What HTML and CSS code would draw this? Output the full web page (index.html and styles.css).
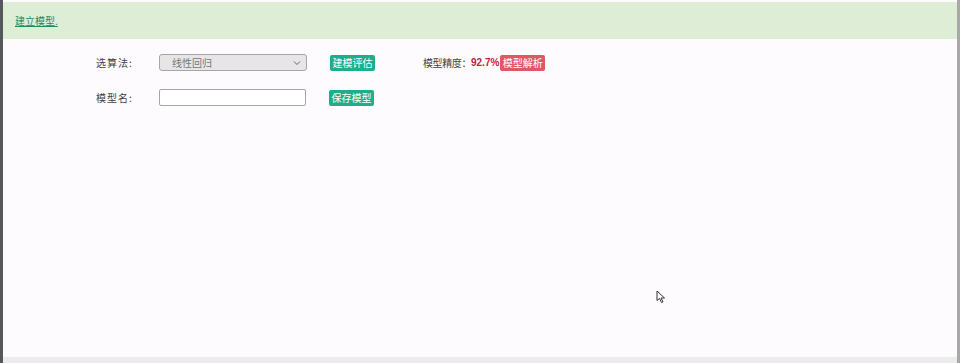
FILE: index.html
```html
<!DOCTYPE html>
<html lang="zh">
<head>
    <meta charset="UTF-8">
    <meta name="viewport" content="width=device-width, initial-scale=1.0">
    <title>建立模型</title>
    <link rel="stylesheet" href="styles.css">
</head>
<body>
    <div class="frame">
        <!-- Header -->
        <div class="panel-head">
            <a href="#">建立模型.</a>
        </div>

        <!-- Form -->
        <div class="panel-body">
            <div class="row">
                <label class="lbl">选算法:</label>
                <div class="select">
                    <span>线性回归</span>
                    <svg width="8" height="6" viewBox="0 0 8 6"><path d="M1 1.5 L4 4.5 L7 1.5" fill="none" stroke="#666" stroke-width="1"/></svg>
                </div>
                <button class="btn btn-green">建模评估</button>
                <span class="acc-label">模型精度：</span>
                <span class="acc-value">92.7%</span>
                <button class="btn btn-red">模型解析</button>
            </div>
            <div class="row">
                <label class="lbl">模型名:</label>
                <input type="text" class="text-input">
                <button class="btn btn-green">保存模型</button>
            </div>
        </div>

        <div class="bottom-bar"></div>
    </div>

    <!-- mouse pointer -->
    <svg class="cursor" width="12" height="14" viewBox="0 0 12 14">
        <path d="M1 1 L1 10.5 L3.5 8.5 L5.5 12.5 L7 11.8 L5 8 L8.5 8 Z" fill="#fff" stroke="#333" stroke-width="1"/>
    </svg>
</body>
</html>
```

FILE: styles.css
```css
html, body {
    margin: 0;
    padding: 0;
    height: 100%;
}
body {
    font-family: "Noto Sans CJK SC", "Liberation Sans", sans-serif;
    font-size: 10px;
    background-color: #fdfbfd;
    color: #444;
    overflow: hidden;
}
.frame {
    height: 363px;
    box-sizing: border-box;
    border-left: 3px solid #55585a;
    border-right: 3px solid #a8a8a8;
    padding-top: 2px;
    display: flex;
    flex-direction: column;
    background-color: #fdfbfd;
}
.panel-head {
    background-color: #deedd5;
    height: 37px;
    display: flex;
    align-items: center;
    padding-left: 12px;
}
.panel-head a {
    color: #238a68;
    font-size: 10px;
    text-decoration: underline;
}
.panel-body {
    flex: 1;
    padding: 15px 0 0 93px;
    display: flex;
    flex-direction: column;
    gap: 18px;
}
.row {
    display: flex;
    align-items: center;
    height: 17px;
}
.lbl {
    width: 63px;
    color: #444;
    letter-spacing: 1px;
}
.select {
    height: 15px;
    width: 129px;
    border: 1px solid #a6a6a6;
    border-radius: 3px;
    background-color: #e6e6e6;
    display: flex;
    align-items: center;
    justify-content: space-between;
    padding: 0 5px 0 12px;
    color: #777;
}
.text-input {
    width: 145px;
    height: 15px;
    margin: 0;
    padding: 0;
    border: 1px solid #a6a6a6;
    border-radius: 2px;
    background-color: #fff;
}
.btn {
    border: none;
    border-radius: 2px;
    color: #fff;
    font-family: inherit;
    font-size: 10px;
    height: 16px;
    padding: 0 2.5px;
    line-height: 16px;
    margin: 0;
}
.btn-green {
    background-color: #1eae8a;
    margin-left: 23px;
}
.btn-red {
    background-color: #e15766;
    margin-left: 1px;
}
.acc-label {
    margin-left: 48px;
    color: #444;
    letter-spacing: -0.4px;
}
.acc-value {
    color: #c4203c;
    font-weight: bold;
    font-family: "Liberation Sans", sans-serif;
}
.bottom-bar {
    height: 6px;
    background-color: #ececec;
}
.cursor {
    position: absolute;
    left: 656px;
    top: 290px;
}
```
